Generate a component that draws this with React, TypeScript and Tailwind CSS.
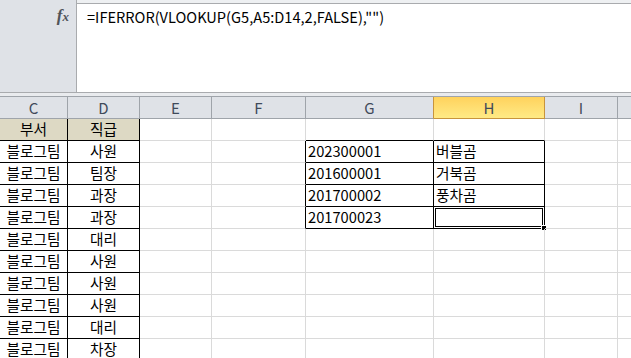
import React from 'react';

type Col = { key: string; w: number };

const cols: Col[] = [
  { key: 'C', w: 68 },
  { key: 'D', w: 72 },
  { key: 'E', w: 72 },
  { key: 'F', w: 94 },
  { key: 'G', w: 128 },
  { key: 'H', w: 111 },
  { key: 'I', w: 73 },
  { key: 'J', w: 40 },
];

const ranks = ['사원', '팀장', '과장', '과장', '대리', '사원', '사원', '사원', '대리', '차장'];
const lookups: [string, string][] = [
  ['202300001', '버블곰'],
  ['201600001', '거북곰'],
  ['201700002', '풍차곰'],
  ['201700023', ''],
];

const font = { fontFamily: "'Noto Sans CJK KR', 'Noto Sans', sans-serif" };

function Cell({
  w,
  children,
  align = 'center',
  right = 'gray',
  bottom = 'gray',
  bg = '',
  selected = false,
}: {
  w: number;
  children?: React.ReactNode;
  align?: 'center' | 'left';
  right?: 'gray' | 'black';
  bottom?: 'gray' | 'black';
  bg?: string;
  selected?: boolean;
}) {
  const r = right === 'black' ? 'border-r-black' : 'border-r-[#dadada]';
  const b = bottom === 'black' ? 'border-b-black' : 'border-b-[#dadada]';
  return (
    <div
      style={{ width: w }}
      className={`relative shrink-0 h-[22px] border-r border-b ${r} ${b} ${bg} flex items-center text-[14.7px] leading-none text-black ${
        align === 'center' ? 'justify-center' : 'justify-start pl-[2px]'
      }`}
    >
      {children}
      {selected && (
        <div className="absolute -left-px -top-px -right-px -bottom-px border-[3px] border-double border-black">
          <div className="absolute -right-[5px] -bottom-[5px] w-[6px] h-[6px] bg-black border border-white" />
        </div>
      )}
    </div>
  );
}

export default function App() {
  return (
    <div className="w-[631px] h-[358px] overflow-hidden bg-white" style={font}>
      {/* formula bar */}
      <div className="flex h-[93px] border-b border-[#a9abae] bg-[#eef0f2]">
        <div className="w-[77px] shrink-0 bg-[#dfe2e7] border-r border-[#a9abae] flex justify-end pr-[7px] pt-[7px]">
          <span
            className="italic font-bold text-[#50545a] text-[17px] leading-none"
            style={{ fontFamily: "'Liberation Serif', serif" }}
          >
            f<span className="text-[13px]">x</span>
          </span>
        </div>
        <div className="flex-1 mt-[3px] bg-white border-t border-[#a9abae] pl-[10px] pt-[4px] text-[14.6px] leading-[18px] text-black">
          =IFERROR(VLOOKUP(G5,A5:D14,2,FALSE),"")
        </div>
      </div>
      <div className="h-[3px] bg-[#e9ebee]" />

      {/* column headers */}
      <div className="flex h-[23px] border-t border-[#9fa4aa]">
        {cols.map(c => {
          const active = c.key === 'H';
          return (
            <div
              key={c.key}
              style={{ width: c.w }}
              className={`shrink-0 h-[22px] border-r border-b flex items-center justify-center text-[15px] leading-none ${
                active
                  ? 'bg-gradient-to-b from-[#ffd25c] to-[#ffea85] border-[#c8943c] text-[#3f4a5a]'
                  : c.key === 'G'
                  ? 'bg-[#dfe2e7] border-b-[#9fa4aa] border-r-[#c8943c] text-[#3f4a5a]'
                  : 'bg-[#dfe2e7] border-[#9fa4aa] text-[#3f4a5a]'
              }`}
            >
              {c.key === 'J' ? '' : c.key}
            </div>
          );
        })}
      </div>

      {/* title row */}
      <div className="flex">
        <Cell w={68} right="black" bottom="black" bg="bg-[#ddd9c4]">부서</Cell>
        <Cell w={72} right="black" bottom="black" bg="bg-[#ddd9c4]">직급</Cell>
        <Cell w={72} />
        <Cell w={94} />
        <Cell w={128} bottom="black" />
        <Cell w={111} bottom="black" />
        <Cell w={73} />
        <Cell w={40} />
      </div>

      {/* data rows */}
      {ranks.map((rank, i) => {
        const lk = lookups[i];
        return (
          <div key={i} className="flex">
            <Cell w={68} right="black" bottom="black">블로그팀</Cell>
            <Cell w={72} right="black" bottom="black">{rank}</Cell>
            <Cell w={72} />
            <Cell w={94} right={lk ? 'black' : 'gray'} />
            <Cell w={128} align="left" right={lk ? 'black' : 'gray'} bottom={lk ? 'black' : 'gray'}>
              {lk?.[0]}
            </Cell>
            <Cell
              w={111}
              align="left"
              right={lk ? 'black' : 'gray'}
              bottom={lk ? 'black' : 'gray'}
              selected={i === 3}
            >
              {lk?.[1]}
            </Cell>
            <Cell w={73} />
            <Cell w={40} />
          </div>
        );
      })}
    </div>
  );
}
